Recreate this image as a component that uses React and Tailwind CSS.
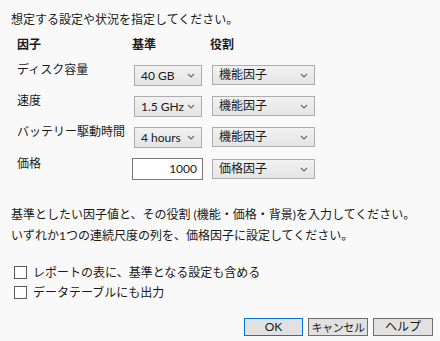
import React from "react";

const FONT = {
  fontFamily: 'Lato, "Noto Sans CJK JP", sans-serif',
};

function Chevron() {
  return (
    <svg width="8" height="5" viewBox="0 0 8 5" className="shrink-0">
      <path d="M1 1 L4 4 L7 1" fill="none" stroke="#6b6b6b" strokeWidth="1.2" />
    </svg>
  );
}

function Select({ value, wide }) {
  return (
    <div
      className={`${
        wide ? "w-[103px] h-[20px]" : "w-[68px] h-[21px] ml-[2px]"
      } flex items-center justify-between pl-[6px] pr-[6px] border border-[#adadad] bg-linear-to-b from-[#f2f2f2] to-[#e4e4e4] text-[12px] text-[#1a1a1a]`}
    >
      <span className="leading-none whitespace-nowrap">{value}</span>
      <Chevron />
    </div>
  );
}

const ROWS = [
  { label: "ディスク容量", base: "40 GB", role: "機能因子" },
  { label: "速度", base: "1.5 GHz", role: "機能因子" },
  { label: "バッテリー駆動時間", base: "4 hours", role: "機能因子" },
];

export default function App() {
  return (
    <div
      className="w-[440px] h-[341px] bg-[#f9f9f9] text-[#1a1a1a] overflow-hidden flex flex-col"
      style={FONT}
    >
      <p className="pt-[12px] pl-[11px] text-[12px] leading-[16px]">
        想定する設定や状況を指定してください。
      </p>

      {/* factor table */}
      <div className="ml-[17px] mt-[9px] grid grid-cols-[115px_80px_103px]">
        <div className="h-[28px] text-[12px] leading-[16px] font-bold">因子</div>
        <div className="h-[28px] text-[12px] leading-[16px] font-bold">基準</div>
        <div className="h-[28px] text-[12px] leading-[16px] font-bold -ml-[2px]">役割</div>

        {ROWS.map((r) => (
          <React.Fragment key={r.label}>
            <div className="h-[31px] text-[12px] leading-[16px] -mt-[3px] whitespace-nowrap">
              {r.label}
            </div>
            <div className="h-[31px]">
              <Select value={r.base} />
            </div>
            <div className="h-[31px]">
              <Select value={r.role} wide />
            </div>
          </React.Fragment>
        ))}

        <div className="h-[22px] text-[12px] leading-[16px] -mt-[2px]">価格</div>
        <div className="h-[22px]">
          <div className="w-[71px] h-[22px] border border-[#7a7a7a] bg-white text-right pr-[5px] text-[12px] leading-[20px]">
            1000
          </div>
        </div>
        <div className="h-[22px] pt-[1px]">
          <Select value="価格因子" wide />
        </div>
      </div>

      <div className="mt-[24px] pl-[11px] text-[12px] leading-[21px]">
        <p>基準としたい因子値と、その役割 (機能・価格・背景)を入力してください。</p>
        <p>いずれか1つの連続尺度の列を、価格因子に設定してください。</p>
      </div>

      <div className="mt-[20px] pl-[14px] flex flex-col gap-[7px]">
        {["レポートの表に、基準となる設定も含める", "データテーブルにも出力"].map((t) => (
          <label key={t} className="flex items-center gap-[6px] text-[12px] leading-[13px]">
            <span className="w-[13px] h-[13px] border border-[#5a5a5a] bg-white shrink-0" />
            <span>{t}</span>
          </label>
        ))}
      </div>

      <div className="mt-auto mb-[5px] pr-[7px] flex justify-end gap-[5px]">
        <button className="w-[59px] h-[18px] border border-[#0078d7] bg-[#e1e1e1] text-[12px] leading-none whitespace-nowrap">
          OK
        </button>
        <button className="w-[60px] h-[18px] px-0 border border-[#6e6e6e] bg-[#e1e1e1] text-[11px] tracking-[-0.4px] leading-none whitespace-nowrap">
          キャンセル
        </button>
        <button className="w-[60px] h-[18px] border border-[#6e6e6e] bg-[#e1e1e1] text-[12px] leading-none whitespace-nowrap">
          ヘルプ
        </button>
      </div>
    </div>
  );
}
